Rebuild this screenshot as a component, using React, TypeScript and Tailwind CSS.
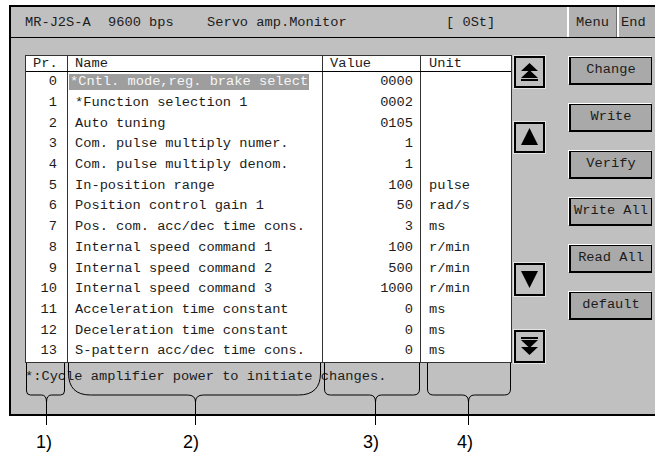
import React from "react";

type Row = { pr: number; name: string; value: string; unit: string };

const rows: Row[] = [
  { pr: 0, name: "*Cntl. mode,reg. brake select", value: "0000", unit: "" },
  { pr: 1, name: "*Function selection 1", value: "0002", unit: "" },
  { pr: 2, name: "Auto tuning", value: "0105", unit: "" },
  { pr: 3, name: "Com. pulse multiply numer.", value: "1", unit: "" },
  { pr: 4, name: "Com. pulse multiply denom.", value: "1", unit: "" },
  { pr: 5, name: "In-position range", value: "100", unit: "pulse" },
  { pr: 6, name: "Position control gain 1", value: "50", unit: "rad/s" },
  { pr: 7, name: "Pos. com. acc/dec time cons.", value: "3", unit: "ms" },
  { pr: 8, name: "Internal speed command 1", value: "100", unit: "r/min" },
  { pr: 9, name: "Internal speed command 2", value: "500", unit: "r/min" },
  { pr: 10, name: "Internal speed command 3", value: "1000", unit: "r/min" },
  { pr: 11, name: "Acceleration time constant", value: "0", unit: "ms" },
  { pr: 12, name: "Deceleration time constant", value: "0", unit: "ms" },
  { pr: 13, name: "S-pattern acc/dec time cons.", value: "0", unit: "ms" },
];

const actions = ["Change", "Write", "Verify", "Write All", "Read All", "default"];

function brace(x1: number, x2: number, xm: number, r: number, s: number) {
  const y0 = 363;
  const y1 = 395;
  const yp = 402;
  return `M${x1} ${y0} L${x1} ${y1 - r} Q${x1} ${y1} ${x1 + r} ${y1} L${xm - s} ${y1} Q${xm} ${y1} ${xm} ${yp} Q${xm} ${y1} ${xm + s} ${y1} L${x2 - r} ${y1} Q${x2} ${y1} ${x2} ${y1 - r} L${x2} ${y0} M${xm} ${yp} L${xm} 425`;
}

function ScrollButton({ h, children }: { h: string; children: React.ReactNode }) {
  return (
    <div className={`w-[31px] ${h} border-2 border-black bg-[#c0c0c0] shadow-[0_0_0_1px_#e4e4e4] flex items-center justify-center`}>
      <svg width="25" height="25" viewBox="0 0 25 25">
        {children}
      </svg>
    </div>
  );
}

export default function App() {
  return (
    <div className="relative w-[655px] h-[454px] overflow-hidden bg-white font-['Liberation_Mono',monospace] text-[13.7px] text-[#1c1c1c]">
      <div className="ml-[9px] mt-[5px] w-[660px] h-[411px] border-2 border-black bg-[#c0c0c0] flex flex-col">
        {/* title bar */}
        <div className="h-[31px] border-b border-black flex items-center">
          <span className="pl-[14px] pt-[3px] w-[97px]">MR-J2S-A</span>
          <span className="pt-[3px] w-[99px]">9600 bps</span>
          <span className="pt-[3px] w-[239px]">Servo amp.Monitor</span>
          <span className="pt-[3px]">[ 0St]</span>
          <div className="ml-auto flex h-full">
            <div className="w-[50px] h-full bg-[#b2b2b2] border-l-2 border-white border-r border-r-[#707070] pt-[3px] flex items-center justify-center">
              Menu
            </div>
            <div className="w-[50px] h-full bg-[#b2b2b2] border-l-2 border-white pt-[3px] flex items-center pl-[2px]">
              End
            </div>
          </div>
        </div>

        {/* body */}
        <div className="flex-1 flex pl-[14px]">
          <div className="flex flex-col mt-[17px]">
            <div className="w-[487px] border border-[#333] bg-white">
              <div className="flex h-[16px] border-b border-black leading-[15px]">
                <div className="w-[41px] pl-[7px]">Pr.</div>
                <div className="w-[255px] border-l border-[#333] pl-[7px]">Name</div>
                <div className="w-[98px] border-l border-[#333] pl-[7px]">Value</div>
                <div className="w-[91px] border-l border-[#333] pl-[8px]">Unit</div>
              </div>
              <div className="h-[290px] flex flex-col">
                {rows.map((r) => (
                  <div key={r.pr} className="flex-1 flex">
                    <div className="w-[41px] pr-[10px] text-right flex items-center justify-end">{r.pr}</div>
                    <div className="w-[255px] border-l border-[#333] flex items-center whitespace-pre">
                      {r.pr === 0 ? (
                        <span className="ml-[1px] bg-[#9e9e9e] text-[#f6f6f6] px-[1px] leading-[16px]">{r.name}</span>
                      ) : (
                        <span className="pl-[7px]">{r.name}</span>
                      )}
                    </div>
                    <div className="w-[98px] border-l border-[#333] pr-[7px] flex items-center justify-end">{r.value}</div>
                    <div className="w-[91px] border-l border-[#333] pl-[8px] flex items-center">{r.unit}</div>
                  </div>
                ))}
              </div>
            </div>
            <div className="mt-[5px] leading-[17px]">*:Cycle amplifier power to initiate changes.</div>
          </div>

          {/* scroll buttons */}
          <div className="ml-[2px] mt-[18px] flex flex-col">
            <ScrollButton h="h-[32px]">
              <polygon points="12.5,3 4,11 21,11" fill="#000" />
              <polygon points="12.5,10 4,18 21,18" fill="#000" />
              <rect x="4" y="19" width="17" height="2" fill="#000" />
            </ScrollButton>
            <div className="mt-[34px]">
              <ScrollButton h="h-[31px]">
                <polygon points="12.5,3 4,20 21,20" fill="#000" />
              </ScrollButton>
            </div>
            <div className="mt-[110px]">
              <ScrollButton h="h-[33px]">
                <polygon points="12.5,21 4,4 21,4" fill="#000" />
              </ScrollButton>
            </div>
            <div className="mt-[34px]">
              <ScrollButton h="h-[33px]">
                <rect x="4" y="3" width="17" height="2" fill="#000" />
                <polygon points="12.5,14 4,6 21,6" fill="#000" />
                <polygon points="12.5,21 4,13 21,13" fill="#000" />
              </ScrollButton>
            </div>
          </div>

          {/* action buttons */}
          <div className="ml-[24px] mt-[19px] flex flex-col gap-[19px]">
            {actions.map((a) => (
              <div
                key={a}
                className="w-[83px] h-[28px] border-2 border-black border-r border-t bg-[#a9a9a9] shadow-[-1px_-1px_0_#ffffff] flex items-center justify-center whitespace-pre"
              >
                {a}
              </div>
            ))}
          </div>
        </div>
      </div>

      {/* annotation overlay */}
      <svg className="absolute left-0 top-0 pointer-events-none" width="655" height="454" viewBox="0 0 655 454">
        <g fill="none" stroke="#000" strokeWidth="1">
          <path d={brace(26.5, 64.5, 46.5, 4, 5)} />
          <path d={brace(68.5, 320.5, 195.5, 22, 8)} />
          <path d={brace(324.5, 419.5, 375.5, 6, 6)} />
          <path d={brace(427.5, 510.5, 468.5, 6, 6)} />
        </g>
      </svg>
      <div className="absolute left-[36px] top-[433px] font-['Liberation_Sans',Arial,sans-serif] text-[18px] leading-[18px] text-black">1)</div>
      <div className="absolute left-[183px] top-[433px] font-['Liberation_Sans',Arial,sans-serif] text-[18px] leading-[18px] text-black">2)</div>
      <div className="absolute left-[363px] top-[433px] font-['Liberation_Sans',Arial,sans-serif] text-[18px] leading-[18px] text-black">3)</div>
      <div className="absolute left-[457px] top-[433px] font-['Liberation_Sans',Arial,sans-serif] text-[18px] leading-[18px] text-black">4)</div>
    </div>
  );
}
